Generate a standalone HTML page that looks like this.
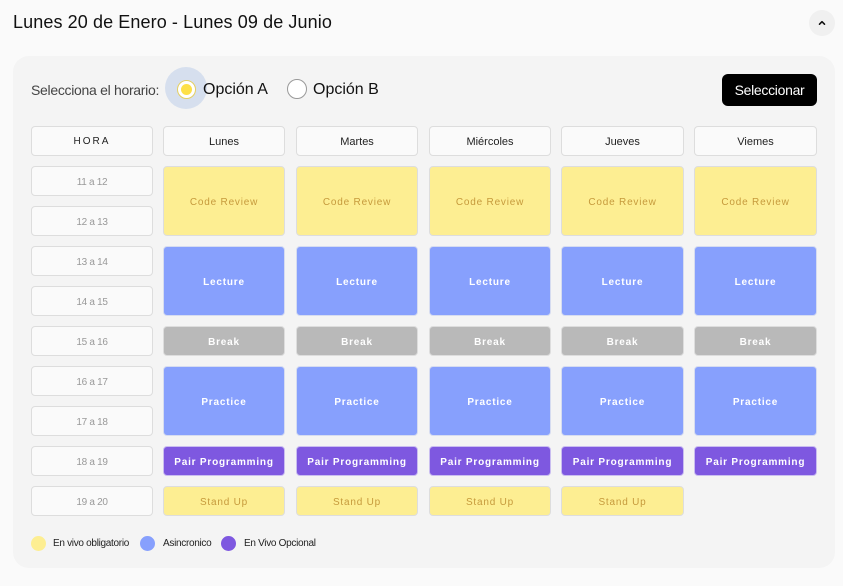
<!DOCTYPE html>
<html><head><meta charset="utf-8"><style>
*{box-sizing:border-box;margin:0;padding:0}
body{width:843px;height:586px;background:#fafafa;font-family:"Liberation Sans",sans-serif;position:relative;overflow:hidden}
.a{position:absolute}
.c{position:absolute;border-radius:4px;border:1px solid #ddd;display:flex;align-items:center;justify-content:center;font-size:10px;letter-spacing:.8px;font-weight:bold;padding-top:2px}
.h{background:#fafafa;color:#222;font-weight:normal;letter-spacing:0;font-size:11px;padding-top:1px}
.t{background:#fafafa;color:#999;font-weight:normal;letter-spacing:-.3px;font-size:10px}
.y{background:#fdee92;color:#c69a3c;font-weight:normal}
.b{background:#87a0fd;color:#fff;border-color:#d6dcf0}
.g{background:#b9b9b9;color:#fff}
.p{background:#7e58e0;color:#fff;border-color:#c9bdf0}
.dot{position:absolute;width:15px;height:15px;border-radius:50%}
.lg{position:absolute;font-size:10px;color:#222;top:538px;letter-spacing:-.3px}
</style></head><body>
<div class="a" style="left:13px;top:12px;font-size:18px;color:#111;letter-spacing:.1px">Lunes 20 de Enero - Lunes 09 de Junio</div>
<div class="a" style="left:809px;top:10px;width:26px;height:26px;border-radius:50%;background:#f0f0f0"></div>
<svg class="a" style="left:817px;top:18px" width="10" height="10" viewBox="0 0 10 10"><path d="M2.5 6.2 L5 3.7 L7.5 6.2" fill="none" stroke="#111" stroke-width="1.6" stroke-linecap="round" stroke-linejoin="round"/></svg>
<div class="a" style="left:13px;top:56px;width:822px;height:512px;background:#f4f4f4;border-radius:16px"></div>
<div class="a" style="left:31px;top:82px;font-size:14px;color:#444;letter-spacing:-.3px">Selecciona el horario:</div>
<div class="a" style="left:165px;top:67px;width:42px;height:42px;border-radius:50%;background:#d6dfee"></div>
<div class="a" style="left:177px;top:80px;width:19px;height:19px;border-radius:50%;background:#fff;border:1px solid #e4cf60"></div>
<div class="a" style="left:181px;top:84px;width:11px;height:11px;border-radius:50%;background:#fde047"></div>
<div class="a" style="left:203px;top:81px;font-size:16px;color:#111">Opción A</div>
<div class="a" style="left:287px;top:79px;width:20px;height:20px;border-radius:50%;background:#fff;border:1px solid #999"></div>
<div class="a" style="left:313px;top:81px;font-size:16px;color:#111">Opción B</div>
<div class="a" style="left:722px;top:74px;width:95px;height:32px;border-radius:6px;background:#000;color:#fff;font-size:14px;text-align:center;line-height:32px;letter-spacing:-.3px">Seleccionar</div>

<div class="c h" style="left:31px;top:126px;width:122px;height:30px;letter-spacing:2px;font-size:10px">HORA</div>
<div class="c h" style="left:163px;top:126px;width:122px;height:30px">Lunes</div>
<div class="c h" style="left:296px;top:126px;width:122px;height:30px">Martes</div>
<div class="c h" style="left:429px;top:126px;width:122px;height:30px">Miércoles</div>
<div class="c h" style="left:561px;top:126px;width:123px;height:30px">Jueves</div>
<div class="c h" style="left:694px;top:126px;width:123px;height:30px">Viemes</div>

<div class="c t" style="left:31px;top:166px;width:122px;height:30px">11 a 12</div>
<div class="c t" style="left:31px;top:206px;width:122px;height:30px">12 a 13</div>
<div class="c t" style="left:31px;top:246px;width:122px;height:30px">13 a 14</div>
<div class="c t" style="left:31px;top:286px;width:122px;height:30px">14 a 15</div>
<div class="c t" style="left:31px;top:326px;width:122px;height:30px">15 a 16</div>
<div class="c t" style="left:31px;top:366px;width:122px;height:30px">16 a 17</div>
<div class="c t" style="left:31px;top:406px;width:122px;height:30px">17 a 18</div>
<div class="c t" style="left:31px;top:446px;width:122px;height:30px">18 a 19</div>
<div class="c t" style="left:31px;top:486px;width:122px;height:30px">19 a 20</div>

<div id="g"></div>
<script>
var xs=[163,296,429,561,694],ws=[122,122,122,123,123],h='';
var rows=[['y',166,70,'Code Review'],['b',246,70,'Lecture'],['g',326,30,'Break'],['b',366,70,'Practice'],['p',446,30,'Pair Programming'],['y',486,30,'Stand Up']];
rows.forEach(function(r){xs.forEach(function(x,i){if(r[3]=='Stand Up'&&i==4)return;h+='<div class="c '+r[0]+'" style="left:'+x+'px;top:'+r[1]+'px;width:'+ws[i]+'px;height:'+r[2]+'px">'+r[3]+'</div>';});});
document.getElementById('g').outerHTML=h;
</script>

<div class="dot" style="left:31px;top:536px;background:#fdee92"></div>
<div class="lg" style="left:53px">En vivo obligatorio</div>
<div class="dot" style="left:140px;top:536px;background:#87a0fd"></div>
<div class="lg" style="left:163px">Asincronico</div>
<div class="dot" style="left:221px;top:536px;background:#7e58e0"></div>
<div class="lg" style="left:244px">En Vivo Opcional</div>
</body></html>
